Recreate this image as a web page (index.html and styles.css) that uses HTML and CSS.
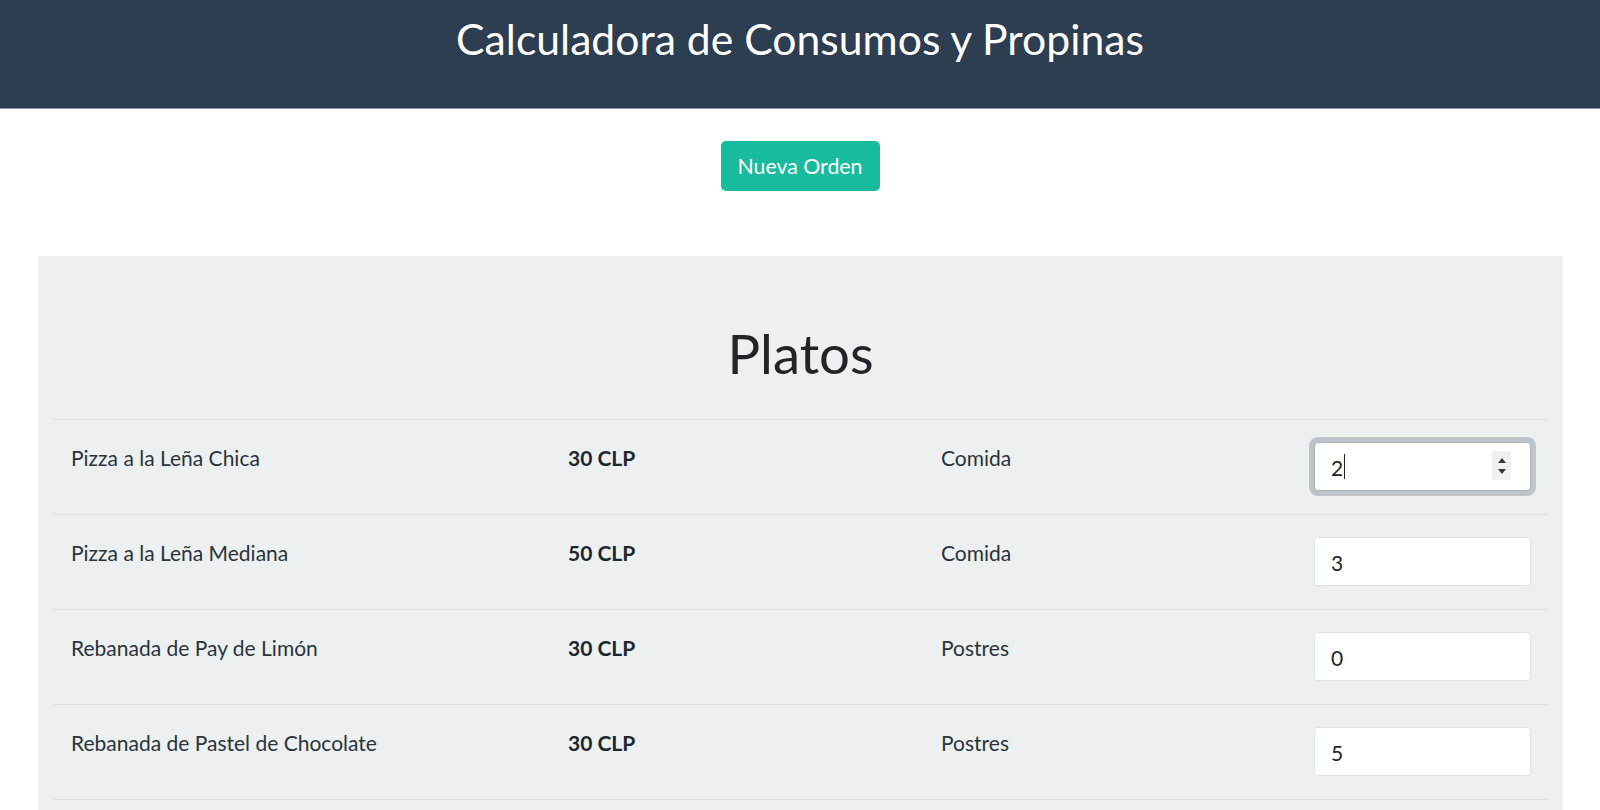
FILE: index.html
```html
<!DOCTYPE html>
<html lang="es">
<head>
<meta charset="utf-8">
<title>Calculadora de Consumos y Propinas</title>
<link rel="stylesheet" href="styles.css">
</head>
<body>
<header class="topbar">
  <h1 class="title">Calculadora de Consumos y Propinas</h1>
</header>
<div class="actions">
  <button class="btn-new" type="button">Nueva Orden</button>
</div>
<section class="well">
  <h2 class="well-title">Platos</h2>
  <div class="table">
    <div class="row">
      <div class="cell">Pizza a la Leña Chica</div>
      <div class="cell price">30 CLP</div>
      <div class="cell">Comida</div>
      <div class="cell cell-input">
        <div class="field is-focused">
          <input class="qty" type="number" value="2">
          <span class="caret"></span>
          <span class="spin"><span class="tri up"></span><span class="tri down"></span></span>
        </div>
      </div>
    </div>
    <div class="row">
      <div class="cell">Pizza a la Leña Mediana</div>
      <div class="cell price">50 CLP</div>
      <div class="cell">Comida</div>
      <div class="cell cell-input"><div class="field"><input class="qty" type="number" value="3"></div></div>
    </div>
    <div class="row">
      <div class="cell">Rebanada de Pay de Limón</div>
      <div class="cell price">30 CLP</div>
      <div class="cell">Postres</div>
      <div class="cell cell-input"><div class="field"><input class="qty" type="number" value="0"></div></div>
    </div>
    <div class="row">
      <div class="cell">Rebanada de Pastel de Chocolate</div>
      <div class="cell price">30 CLP</div>
      <div class="cell">Postres</div>
      <div class="cell cell-input"><div class="field"><input class="qty" type="number" value="5"></div></div>
    </div>
  </div>
</section>
</body>
</html>
```
FILE: styles.css
```css
* { box-sizing: border-box; }
html, body { margin: 0; padding: 0; }
body {
  font-family: Lato, "Noto Sans", sans-serif;
  color: #2b333c;
  background: #fff;
  overflow: hidden;
  height: 810px;
}
.topbar {
  background: #2c3e50;
  height: 109px;
  border-bottom: 1px solid #8a96a1;
  display: flex;
  justify-content: center;
}
.title {
  margin: 0;
  padding-top: 13px;
  color: #fff;
  font-weight: 400;
  font-size: 42.7px;
  line-height: 52px;
}
.actions {
  display: flex;
  justify-content: center;
  padding-top: 32px;
}
.btn-new {
  font-family: Lato, "Noto Sans", sans-serif;
  background: #18bc9c;
  color: #fff;
  border: none;
  border-radius: 5px;
  font-size: 21.3px;
  height: 50px;
  width: 159px;
  padding: 0;
}
.well {
  margin: 65px 37px 0 38px;
  background: #ecf0f1;
  padding: 65px 16px 0 16px;
  height: 600px;
}
.well-title {
  margin: 0;
  text-align: center;
  font-weight: 400;
  font-size: 54.5px;
  line-height: 64px;
  color: #212529;
  height: 98px;
}
.table {
  border-top: 1px solid #dde1e3;
}
.row {
  display: grid;
  grid-template-columns: 497px 373px 373px 1fr;
  border-bottom: 1px solid #dde1e3;
  height: 95px;
}
.cell {
  padding: 24px 16px 0 17px;
  font-size: 21px;
  line-height: 28px;
}
.cell-input { padding-top: 22px; }
.price { font-weight: 700; color: #1f262d; }
.field {
  position: relative;
  width: 217px;
}
.qty {
  display: block;
  width: 217px;
  height: 49px;
  border: 1px solid #dfe3e6;
  border-radius: 4px;
  background: #fff;
  font-family: Lato, "Noto Sans", sans-serif;
  font-size: 21px;
  color: #212529;
  padding: 2px 16px 0 16px;
  outline: none;
  -moz-appearance: textfield;
}
.qty::-webkit-outer-spin-button,
.qty::-webkit-inner-spin-button {
  -webkit-appearance: none;
  margin: 0;
}
.is-focused .qty {
  border-color: #aab3ba;
  box-shadow: 0 0 0 5px #bcc3c9;
}
.caret {
  position: absolute;
  left: 30px;
  top: 12px;
  width: 1px;
  height: 25px;
  background: #222;
}
.spin {
  position: absolute;
  right: 20px;
  top: 9px;
  width: 19px;
  height: 29px;
  background: #f1f1f1;
  display: flex;
  flex-direction: column;
  align-items: center;
  justify-content: center;
  gap: 6px;
}
.tri {
  width: 0;
  height: 0;
  border-left: 4.5px solid transparent;
  border-right: 4.5px solid transparent;
}
.tri.up { border-bottom: 5px solid #3a3a3a; }
.tri.down { border-top: 5px solid #3a3a3a; }
```
